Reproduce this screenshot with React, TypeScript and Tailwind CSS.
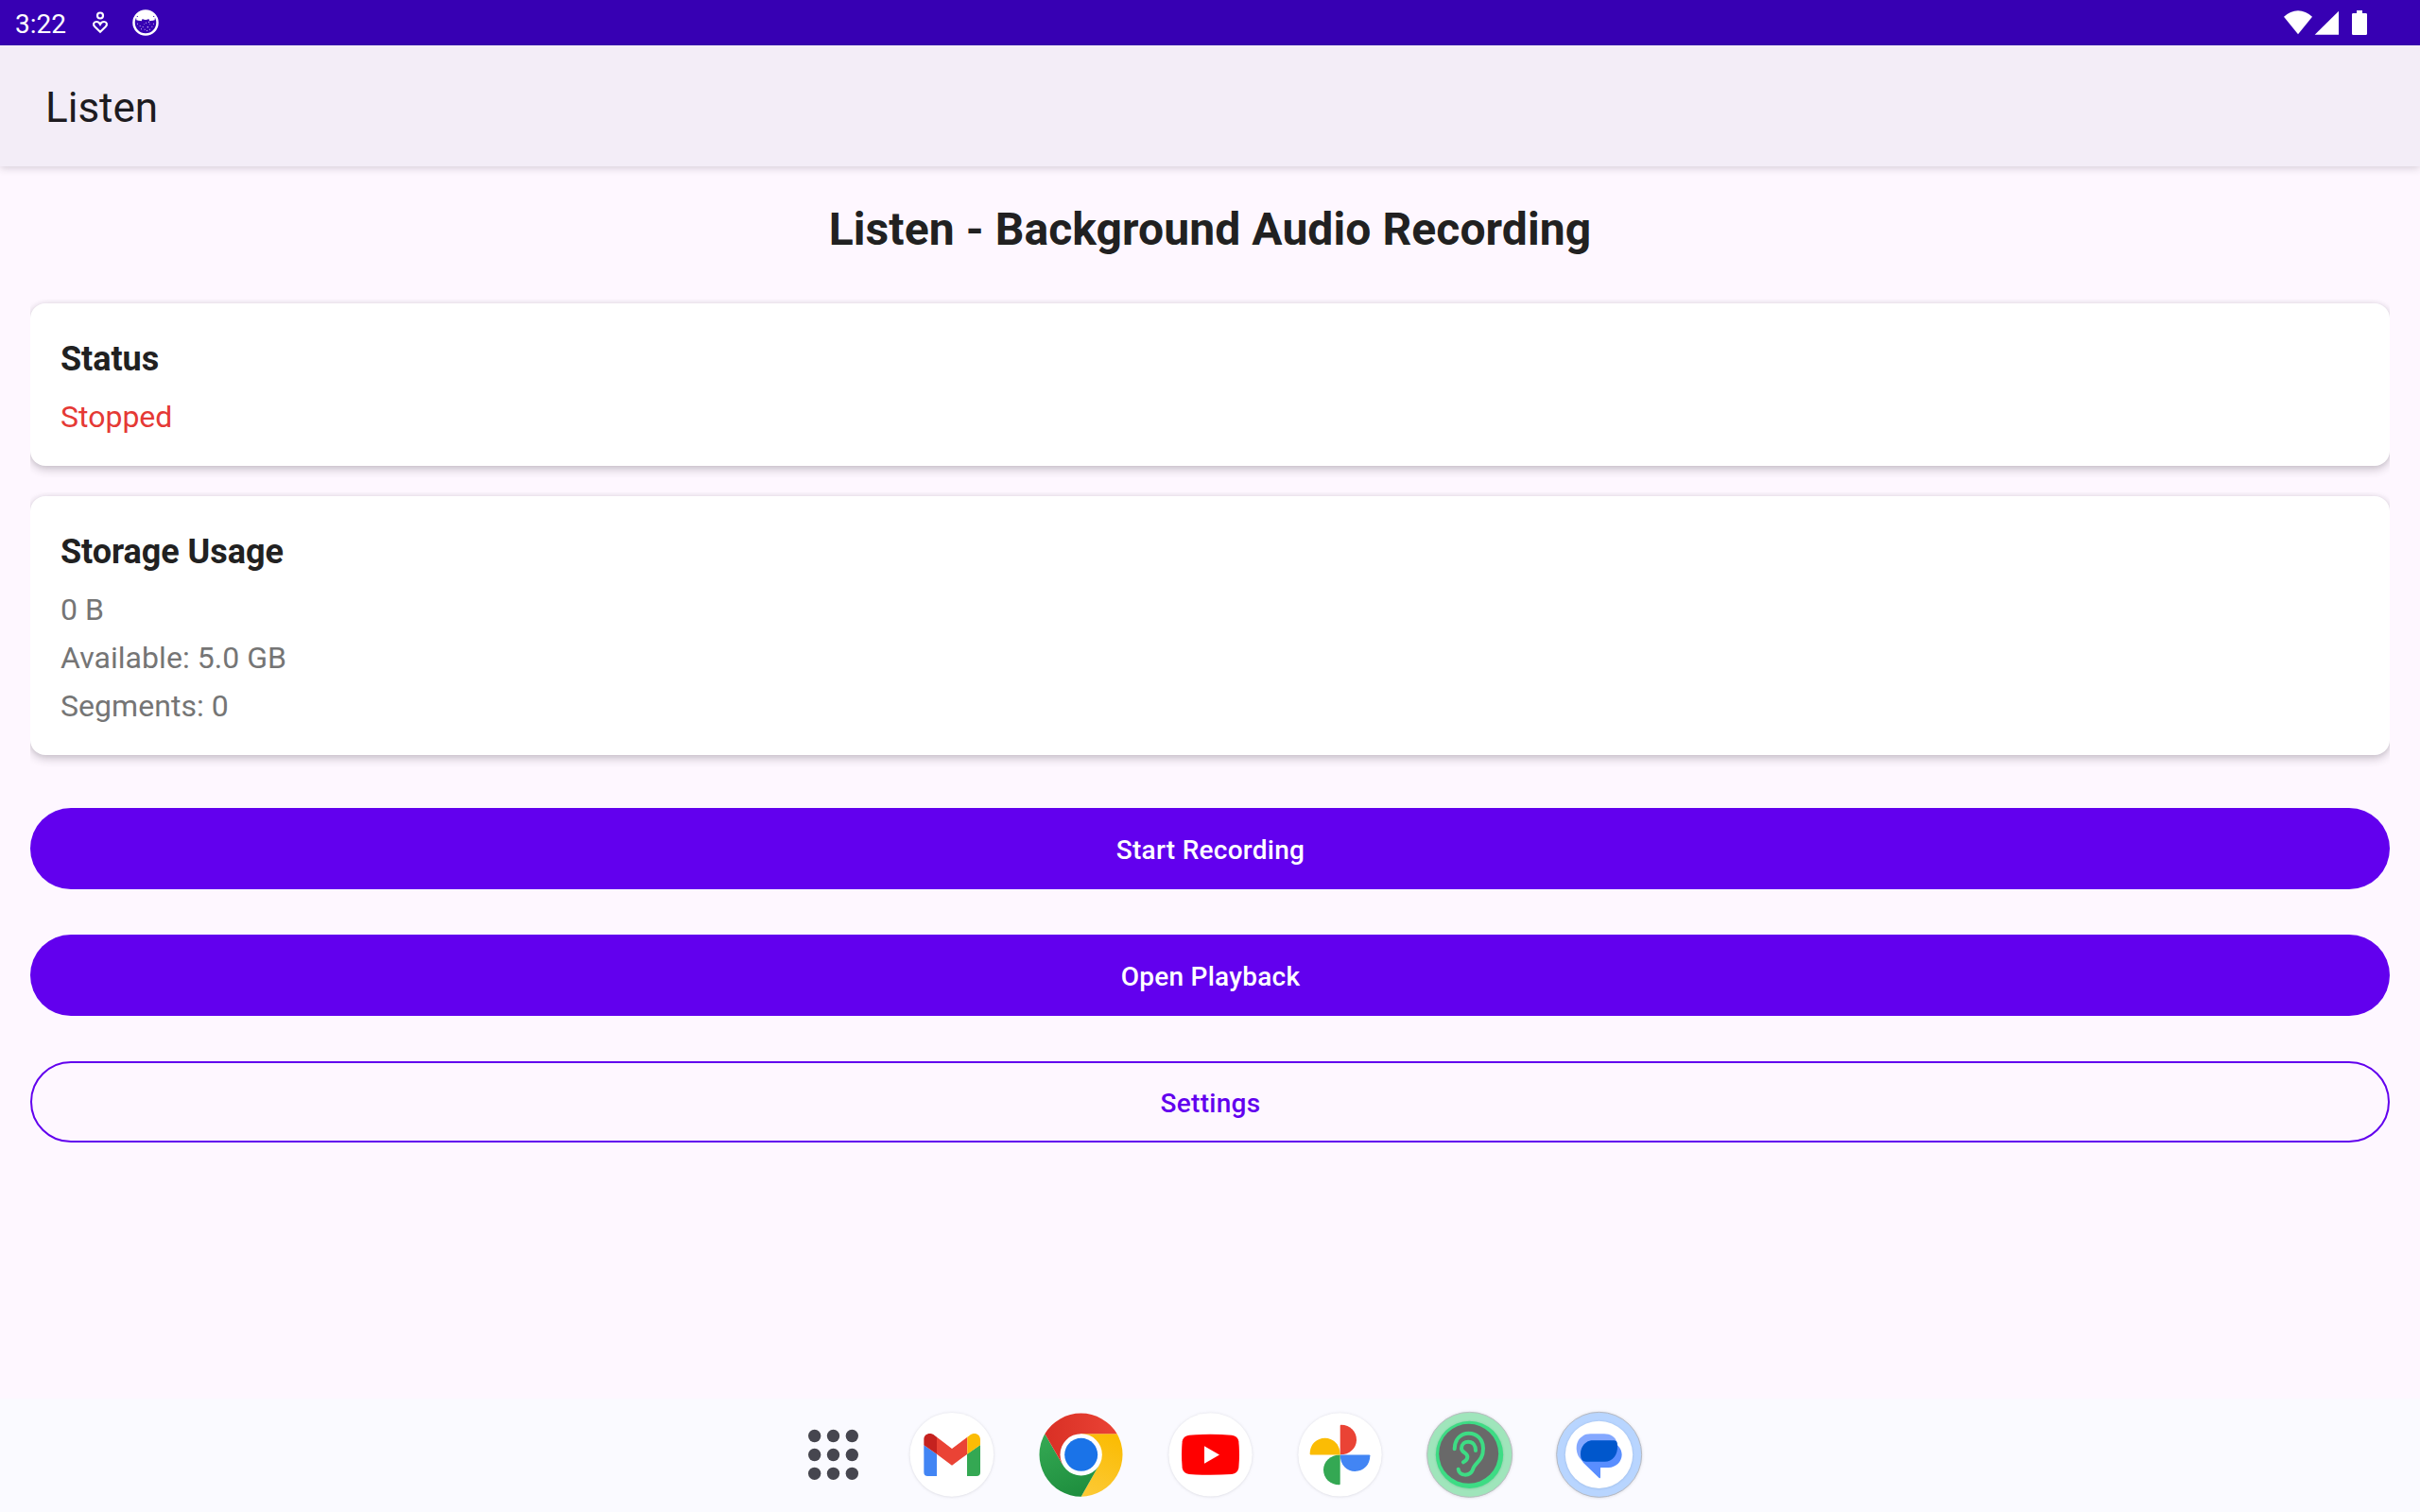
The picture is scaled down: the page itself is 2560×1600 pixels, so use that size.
import React from "react";

function StatusBar() {
  return (
    <header className="flex h-12 items-center justify-between bg-[#3700b3] text-white">
      <div className="flex h-12 items-center">
        <span className="w-[72px] pl-4 pt-[3px] text-[28px] leading-8">3:22</span>
        <svg className="ml-5 h-12 w-7" viewBox="276 0 84 144" fill="none" stroke="#fff" strokeWidth="6.5">
          <circle cx="318" cy="49.500" r="9" />
          <path d="M318 101 L301 85 C294 78 297 69 306 69 C312 69 316 73 318 77 C320 73 324 69 330 69 C339 69 342 78 335 85 Z" />
        </svg>
        <svg className="ml-4 h-12 w-9" viewBox="408 0 108 144">
          <circle cx="462" cy="72" r="37.500" fill="none" stroke="#fff" strokeWidth="7.500" />
          <path d="M462 34 A38 38 0 0 1 490 47 L484 56 L483 65 L475 67 L472 60 C465 64 459 64 452 60 L449 67 L441 65 L440 56 L434 47 A38 38 0 0 1 462 34 Z" fill="#fff" />
          <path d="M432 54 h10 v12 l-9 -2z M482 54 h10 l-1 10 -9 2z" fill="#fff" />
          <path d="M435 74h3v3h-3z M443 81h3v3h-3z M452 84h3v3h-3z M462 71h3v3h-3z M471 68h3v4h-3z M467 84h4v4h-4z M481 83h3v3h-3z M486 74h3v3h-3z M458 92h3v3h-3z M465 96h3v3h-3z M474 92h3v3h-3z M447 91h3v3h-3z M475 76h2v2h-2z M456 76h2v2h-2z" fill="#c9b8ee" />
        </svg>
      </div>
      <svg className="mr-14 h-12 w-[90px]" viewBox="102 0 270 144" fill="#fff">
        <path d="M108 53 C134 27 172 27 198 53 L153 109 Z" />
        <path d="M206 110 L282 35 V110 Z" />
        <path d="M339 33 H357 V42 H368 Q372 42 372 46 V107 Q372 111 368 111 H328 Q324 111 324 107 V46 Q324 42 328 42 H339 Z" />
      </svg>
    </header>
  );
}

function Card({ className, title, children }: { className: string; title: string; children: React.ReactNode }) {
  return (
    <div className={"[clip-path:inset(-8px_0_-20px_0)] " + className}>
      <section className="h-full rounded-2xl bg-white px-8 pt-[38px] shadow-[0_4px_10px_rgba(50,40,55,0.24),0_0_5px_rgba(50,40,55,0.10)]">
        <h2 className="text-[36px] font-bold leading-[42px] tracking-[-0.05px] text-[#212121]">{title}</h2>
        {children}
      </section>
    </div>
  );
}

const discShadow = "[filter:drop-shadow(0_1px_4px_rgba(60,60,80,0.18))]";

function AppsIcon() {
  return (
    <svg className="mr-[29px] size-24" viewBox="-18 63 288 288" fill="#46464f">
      {[148.5, 208.5, 268].map((y) => [65, 124.500, 184].map((x) => <circle key={x + "-" + y} cx={x} cy={y} r="20" />))}
    </svg>
  );
}

function GmailIcon() {
  return (
    <svg className="size-24" viewBox="357 63 288 288">
      <circle className={discShadow} cx="500.500" cy="208" r="133" fill="#fff" />
      <path d="M412 178 L453 206 V276 H424 Q412 276 412 264 Z" fill="#4285f4" />
      <path d="M549 206 L591 177 V264 Q591 276 579 276 H549 Z" fill="#34a853" />
      <path d="M453 152 L501 189 L550 152 V206 L501 242 L453 206 Z" fill="#ea4335" />
      <path d="M412 178 V160 C412 141 433 136 446 147 L453 152 V206 Z" fill="#c5221f" />
      <path d="M550 152 L557 147 C571 135 591 142 591 160 V177 L550 206 Z" fill="#fbbc04" />
    </svg>
  );
}

function ChromeIcon() {
  return (
    <svg className="size-24" viewBox="768 63 288 288">
      <defs>
        <linearGradient id="cr" x1="0" x2="1"><stop stopColor="#d93025" /><stop offset="1" stopColor="#ea4335" /></linearGradient>
        <linearGradient id="cy" x1="0.300" y1="1" x2="0.600" y2="0"><stop stopColor="#fcc934" /><stop offset="1" stopColor="#fbbc04" /></linearGradient>
        <linearGradient id="cg" x1="0.600" y1="1" x2="0.200" y2="0"><stop stopColor="#1e8e3e" /><stop offset="1" stopColor="#34a853" /></linearGradient>
      </defs>
      <path d="M911 142 H1025 A133 133 0 0 1 911 341 L968 241 Z" fill="url(#cy)" />
      <path d="M853 241 L796 142 A133 133 0 0 0 911 341 L968 241 Z" fill="url(#cg)" />
      <path d="M911 142 H1025 A133 133 0 0 0 796 142 L853 241 Z" fill="url(#cr)" />
      <circle cx="911" cy="208" r="66.500" fill="#fff" />
      <circle cx="911" cy="208" r="52.500" fill="#1a73e8" />
    </svg>
  );
}

function YouTubeIcon() {
  return (
    <svg className="size-24" viewBox="99 63 288 288">
      <circle className={discShadow} cx="241.500" cy="208" r="132.500" fill="#fff" />
      <path d="M174 146 Q241 141 309 146 Q328 148 331 166 Q335 208 331 250 Q328 268 309 270 Q241 275 174 270 Q155 268 152 250 Q148 208 152 166 Q155 148 174 146 Z" fill="#f00" />
      <path d="M222 181 L270 208.500 L222 236 Z" fill="#fff" />
    </svg>
  );
}

function PhotosIcon() {
  return (
    <svg className="size-24" viewBox="510 63 288 288">
      <circle className={discShadow} cx="652.500" cy="208" r="132.500" fill="#fff" />
      <path d="M653 208 V116 Q653 113 656 113 C685 113 705 134 705 161 C705 187 684 208 653 208 Z" fill="#ea4335" />
      <path d="M653 208.500 H745 Q748 208.500 748 211 C748 241 727 261 700 261 C674 261 653 240 653 208.500 Z" fill="#4285f4" />
      <path d="M653 208.500 V301 Q653 304 650 304 C621 304 600 283 600 256 C600 230 622 208.500 653 208.500 Z" fill="#34a853" />
      <path d="M653 208.500 H560 Q557 208.500 557 205 C557 176 578 155 605 155 C632 155 653 177 653 208.500 Z" fill="#fbbc04" />
    </svg>
  );
}

function EarIcon() {
  return (
    <svg className="size-24" viewBox="81 63 288 288">
      <circle className={discShadow} cx="224" cy="208" r="135" fill="#9fe5bb" stroke="#b9bcbf" strokeWidth="3" />
      <circle className="[filter:drop-shadow(0_1px_3px_rgba(40,100,70,0.25))]" cx="223.500" cy="208" r="107" fill="#3ddc84" />
      <circle cx="221" cy="205" r="94.500" fill="#696969" />
      <g fill="none" stroke="#3ddc84" strokeWidth="12" strokeLinecap="round">
        <path d="M176 190 C176 160 195 140 221 140 C247 140 267 160 267 188 C267 231 237 234 234 256 C225 278 190 277 188 254" />
        <path d="M243 195 C243 178 234 167 220 167 C207 167 198 176 198 188 C198 201 217 202 217 215 C217 225 210 227 204 232" />
      </g>
    </svg>
  );
}

function MessagesIcon() {
  return (
    <svg className="size-24" viewBox="492 63 288 288">
      <circle className={discShadow} cx="635" cy="208" r="135" fill="#b8d5ff" stroke="#b6b9c0" strokeWidth="3" />
      <circle className="[filter:drop-shadow(0_1px_3px_rgba(60,90,140,0.25))]" cx="634.500" cy="208" r="107" fill="#fff" />
      <path d="M607 142 H651 C676 142 693 156 693 184 V200 L582 228 C570 219 563 203 563 186 C563 161 582 142 607 142 Z" fill="#84a8ff" />
      <path d="M611 163 H670 C690 171 707 187 707 208 C707 231 688 249 665 249 H639 V279 Q639 286 634 281 L586 235 C570 218 578 163 611 163 Z" fill="#598eff" />
      <path d="M615 163 H683 Q693 163 693 179 C695 208 677 230 653 230 H594 C581 230 576 222 576 205 C576 182 593 163 615 163 Z" fill="#0057cc" />
    </svg>
  );
}

const buttonBase = "flex h-[86px] w-full items-center justify-center rounded-full pl-px pt-[4px] text-[28px] font-medium leading-8 tracking-[0.27px] ";

export default function App() {
  return (
    <div className="flex h-[1600px] w-[2560px] flex-col overflow-hidden bg-[#fef7ff] font-[Roboto,sans-serif]">
      <StatusBar />
      <div className="flex h-32 shrink-0 items-center bg-[#f3edf7] pl-12 pt-1 text-[44px] leading-[52px] text-[#1d1b20] shadow-[0_2px_8px_rgba(50,40,55,0.2)]">
        Listen
      </div>
      <main className="flex grow flex-col px-8 pt-[39px]">
        <h1 className="text-center text-[48px] font-bold leading-[56px] tracking-[0.09px] text-[#212121]">Listen - Background Audio Recording</h1>
        <Card className="mt-[50px] h-[172px]" title="Status">
          <p className="mt-[21px] text-[32px] leading-[38px] text-[#e53935]">Stopped</p>
        </Card>
        <Card className="mt-8 h-[274px]" title="Storage Usage">
          <div className="mt-[21px] flex flex-col gap-[13px] text-[32px] leading-[38px] tracking-[0.05px] text-[#757575]">
            <p>0 B</p>
            <p>Available: 5.0 GB</p>
            <p>Segments: 0</p>
          </div>
        </Card>
        <div className="mt-14 flex flex-col gap-12">
          <button className={buttonBase + "bg-[#6200ee] text-white"}>Start Recording</button>
          <button className={buttonBase + "bg-[#6200ee] text-white"}>Open Playback</button>
          <button className={buttonBase + "border-2 border-[#6200ee] text-[#6200ee]"}>Settings</button>
        </div>
      </main>
      <nav className="flex h-[120px] shrink-0 items-start justify-center bg-[#fafaff] pl-3.5 pt-[11px]">
        <AppsIcon />
        <div className="flex gap-[41px]">
          <GmailIcon />
          <ChromeIcon />
          <YouTubeIcon />
          <PhotosIcon />
          <EarIcon />
          <MessagesIcon />
        </div>
      </nav>
    </div>
  );
}
